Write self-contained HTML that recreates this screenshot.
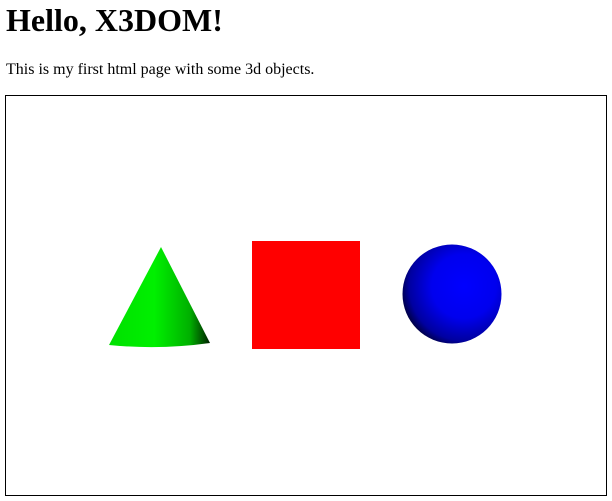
<!DOCTYPE html>
<html><head><style>
body{margin:0;background:#fff;font-family:"Liberation Serif",serif;color:#000;}
h1{position:absolute;left:6px;top:0;margin:0;font-size:32px;line-height:40px;font-weight:bold;}
p{position:absolute;left:6px;top:60px;margin:0;font-size:16px;line-height:20px;}
#box{position:absolute;left:5px;top:95px;width:600px;height:399px;border:1px solid #000;}
svg{position:absolute;left:0;top:0;}
</style></head><body>
<h1>Hello, X3DOM!</h1>
<p>This is my first html page with some 3d objects.</p>
<div id="box"></div>
<svg width="612" height="501">
<defs>
<linearGradient id="g" x1="0" x2="1" y1="0" y2="0">
<stop offset="0" stop-color="#00e000"/>
<stop offset="0.45" stop-color="#00f000"/>
<stop offset="0.8" stop-color="#00b000"/>
<stop offset="1" stop-color="#002000"/>
</linearGradient>
<radialGradient id="b" cx="0.62" cy="0.42" r="0.65">
<stop offset="0" stop-color="#0000ff"/>
<stop offset="0.5" stop-color="#0000ee"/>
<stop offset="0.85" stop-color="#0000a0"/>
<stop offset="1" stop-color="#000040"/>
</radialGradient>
</defs>
<path d="M161 247 L210 343 Q160 350 109 345 Z" fill="url(#g)"/>
<rect x="252" y="241" width="108" height="108" fill="#ff0000"/>
<circle cx="452" cy="294" r="49.5" fill="url(#b)"/>
</svg>
</body></html>
